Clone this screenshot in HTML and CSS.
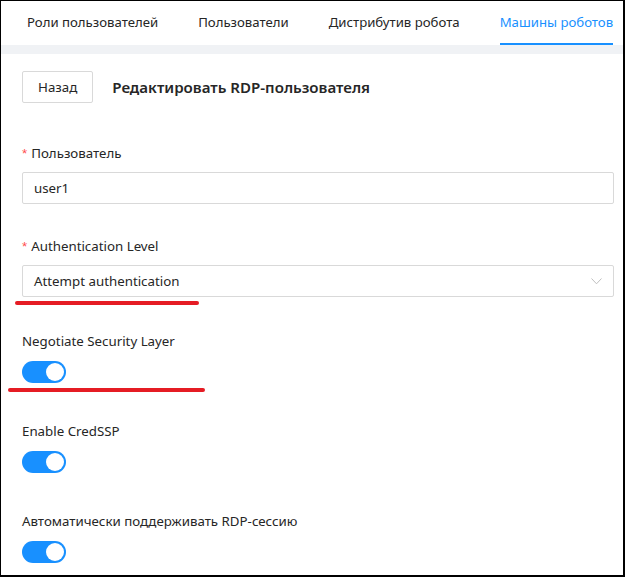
FILE: index.html
```html
<!DOCTYPE html>
<html lang="ru">
<head>
<meta charset="utf-8">
<title>Редактировать RDP-пользователя</title>
<link rel="stylesheet" href="styles.css">
</head>
<body>
<div class="frame">
  <nav class="tabs">
    <div class="tab">Роли пользователей</div>
    <div class="tab">Пользователи</div>
    <div class="tab">Дистрибутив робота</div>
    <div class="tab active">Машины роботов</div>
  </nav>
  <div class="band"></div>
  <main class="content">
    <div class="header">
      <button class="btn">Назад</button>
      <h1 class="title">Редактировать RDP-пользователя</h1>
    </div>
    <form class="form">
      <div class="item item-input">
        <label class="label"><span class="req">*</span>Пользователь</label>
        <div class="input">user1</div>
      </div>
      <div class="item item-input item-select">
        <label class="label"><span class="req">*</span>Authentication Level</label>
        <div class="control">
          <div class="input select">
            <span>Attempt authentication</span>
            <svg class="chev" width="11" height="7" viewBox="0 0 11 7"><polyline points="0.5,0.5 5.5,5.8 10.5,0.5" fill="none" stroke="#bfbfbf" stroke-width="1"/></svg>
          </div>
          <span class="mark mark-select"></span>
        </div>
      </div>
      <div class="item item-switch">
        <label class="label">Negotiate Security Layer</label>
        <div class="control">
          <span class="switch"><span class="knob"></span></span>
          <span class="mark mark-switch"></span>
        </div>
      </div>
      <div class="item item-switch">
        <label class="label">Enable CredSSP</label>
        <div class="control">
          <span class="switch"><span class="knob"></span></span>
        </div>
      </div>
      <div class="item item-switch">
        <label class="label">Автоматически поддерживать RDP-сессию</label>
        <div class="control">
          <span class="switch"><span class="knob"></span></span>
        </div>
      </div>
    </form>
  </main>
</div>
</body>
</html>
```
FILE: styles.css
```css
html, body {
  margin: 0;
  padding: 0;
  background: #fff;
}
body {
  font-family: "Noto Sans", "Open Sans", sans-serif;
  font-size: 13.3px;
  color: #262626;
}
.frame {
  width: 625px;
  height: 577px;
  box-sizing: border-box;
  border-style: solid;
  border-color: #000;
  border-width: 1px 2px 2px 1px;
  overflow: hidden;
  background: #fff;
}
.tabs {
  height: 44px;
  display: flex;
  gap: 40px;
  padding-left: 26px;
  white-space: nowrap;
  font-size: 13.2px;
}
.tab {
  display: flex;
  align-items: center;
  box-sizing: border-box;
  border-bottom: 2px solid transparent;
  color: #262626;
}
.tab.active {
  color: #1890ff;
  border-bottom-color: #1890ff;
}
.band {
  height: 9px;
  background: #f0f2f5;
}
.content {
  padding: 17px 9px 0 21px;
}
.header {
  display: flex;
  align-items: center;
  gap: 19px;
  height: 32px;
}
.btn {
  height: 32px;
  box-sizing: border-box;
  padding: 0 15px;
  border: 1px solid #d9d9d9;
  border-radius: 2px;
  background: #fff;
  font-family: inherit;
  font-size: 13.3px;
  color: #262626;
}
.title {
  margin: 0;
  font-size: 15.1px;
  line-height: 22px;
  font-weight: 600;
  color: #262626;
}
.form {
  margin-top: 39px;
  display: flex;
  flex-direction: column;
}
.label {
  display: block;
  height: 22px;
  line-height: 22px;
  padding-bottom: 8px;
  color: #262626;
}
.item-switch .label {
  padding-top: 1px;
  padding-bottom: 7px;
}
.req {
  color: #ff4d4f;
  margin-right: 4px;
  line-height: 1;
  font-family: SimSun, "Liberation Sans", sans-serif;
}
.item-input {
  margin-bottom: 31px;
}
.item-select {
  margin-bottom: 32px;
}
.item-switch {
  margin-bottom: 36px;
}
.control {
  position: relative;
}
.input {
  height: 32px;
  box-sizing: border-box;
  border: 1px solid #d9d9d9;
  border-radius: 2px;
  padding: 0 11px;
  display: flex;
  align-items: center;
  color: #262626;
}
.select {
  justify-content: space-between;
}
.switch {
  display: block;
  position: relative;
  width: 44px;
  height: 22px;
  margin-top: 2px;
  border-radius: 11px;
  background: #1890ff;
}
.knob {
  position: absolute;
  top: 2px;
  left: 24px;
  width: 18px;
  height: 18px;
  border-radius: 50%;
  background: #fff;
}
.mark {
  position: absolute;
  height: 4px;
  border-radius: 2px;
  background: #e51c24;
}
.mark-select {
  left: -7px;
  top: 36px;
  width: 184px;
}
.mark-switch {
  left: -14px;
  top: 27px;
  width: 197px;
}
```
